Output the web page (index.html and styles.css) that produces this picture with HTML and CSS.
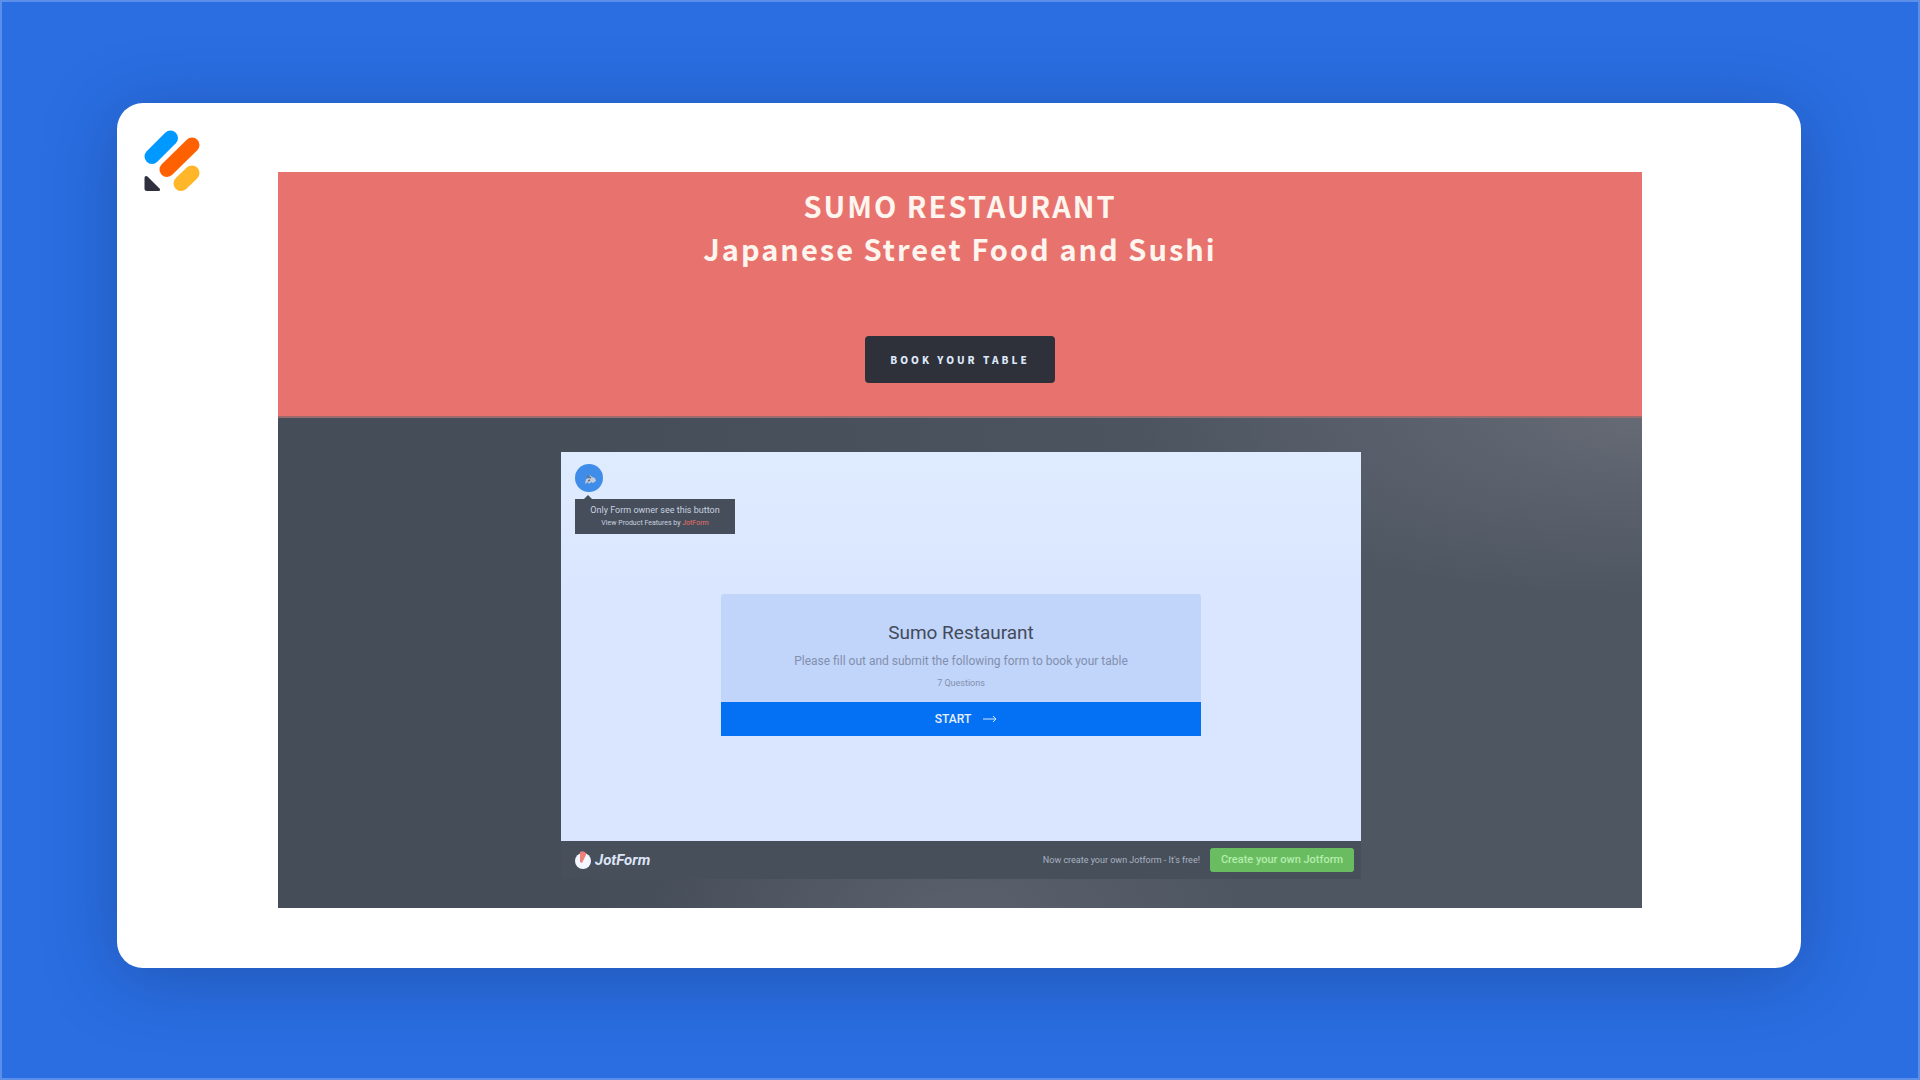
FILE: index.html
```html
<!DOCTYPE html>
<html lang="en">
<head>
  <meta charset="UTF-8" />
  <meta name="viewport" content="width=device-width, initial-scale=1.0"/>
  <title>Sumo Restaurant</title>
  <link rel="stylesheet" href="styles.css">
</head>
<body>
  <main class="card">
    <!-- Brand mark -->
    <svg class="brand" viewBox="0 0 56 62" aria-hidden="true">
      <path d="M8 26.5 L26.5 8" stroke="#0099ff" stroke-width="15" stroke-linecap="round"/>
      <path d="M23 39.5 L48 15" stroke="#ff6100" stroke-width="15" stroke-linecap="round"/>
      <path d="M37 53.5 L48 43" stroke="#ffb629" stroke-width="15" stroke-linecap="round"/>
      <path d="M0.5 48 Q0.5 46 2 46 Q3 46 4 47 L15.500 58.500 Q17 61 14.500 61 H3 Q0.500 61 0.500 58.500 Z" fill="#2e303d"/>
    </svg>

    <div class="site">
      <!-- Hero -->
      <header class="hero">
        <h1>SUMO RESTAURANT<br>Japanese Street Food and Sushi</h1>
        <a class="book" href="#form">BOOK YOUR TABLE</a>
      </header>

      <!-- Embedded form -->
      <section class="booking">
        <div class="embed" id="form">
          <div class="form-page">
            <div class="owner">
              <button class="owner-btn" type="button" aria-label="Form settings">
                <svg viewBox="0 0 14 14" aria-hidden="true">
                  <path d="M2 12 L3 7 L6 6 L7 3 L9 5 L12 6 L13 9 L10 11 L8 10 L6 12 L5 10 Z" fill="#c3cbd8"/>
                  <path d="M4 4 L8 6 M5 9 L7 8" stroke="#68727f" stroke-width="1.500"/>
                </svg>
              </button>
              <p class="tooltip">Only Form owner see this button<br><small>View Product Features by <a href="#">JotForm</a></small></p>
            </div>
            <div class="welcome">
              <div class="welcome-text">
                <h2>Sumo Restaurant</h2>
                <p>Please fill out and submit the following form to book your table</p>
                <p class="count">7 Questions</p>
              </div>
              <button class="start" type="button">START
                <svg viewBox="0 0 14 8" aria-hidden="true"><path d="M0 4 H13 M10 1 L13 4 L10 7" fill="none" stroke="#d6e8ff"/></svg>
              </button>
            </div>
          </div>
          <footer class="form-footer">
            <a class="jotform" href="#">
              <svg viewBox="0 0 18 20" aria-hidden="true">
                <circle cx="9" cy="11" r="8" fill="#f4f7ff"/>
                <path d="M6 2 Q9 0 12 3 L12 5 L8 13 L6 12 Z" fill="#ee827b"/>
              </svg>
              JotForm
            </a>
            <span class="note">Now create your own Jotform - It's free!</span>
            <a class="create" href="#">Create your own Jotform</a>
          </footer>
        </div>
      </section>
    </div>
  </main>
</body>
</html>
```
FILE: styles.css
```css
/* RESET & BASE */
* {
  margin: 0; padding: 0;
  box-sizing: border-box;
}
body {
  min-height: 100vh;
  padding: 101px 117px 110px 115px;
  border: 2px solid #5b8fe9;
  background: #2a6ee2;
  font-family: Roboto, sans-serif;
}
a { color: inherit; text-decoration: none; }
button { border: 0; font-family: inherit; cursor: pointer; }

/* CARD */
.card {
  display: grid;
  grid-template-columns: 134px 1fr;
  padding: 69px 159px 60px 27px;
  border-radius: 26px;
  background: #fff;
  box-shadow: 0 10px 70px rgba(20,50,110,0.4);
}
.brand {
  width: 56px; height: 62px;
  margin-top: -42px;
  fill: none;
}

/* HERO */
.hero {
  display: flex; flex-direction: column;
  align-items: center;
  height: 246px;
  padding-top: 12px;
  border-bottom: 2px solid #9c6b6d;
  background: #e8736e;
}
.hero h1 {
  font-family: "Noto Sans CJK JP", sans-serif;
  font-size: 29px; font-weight: 700;
  line-height: 43px; letter-spacing: 2px;
  text-align: center;
  color: #fff5ef;
}
.book {
  margin-top: 66px;
  padding: 0 25px;
  border-radius: 4px;
  background: #2e303a;
  color: #dce7f8;
  font-family: "Noto Sans CJK JP", sans-serif;
  font-size: 10px; font-weight: 900;
  line-height: 47px; letter-spacing: 3px;
}

/* BOOKING */
.booking {
  padding: 34px 0 29px 2px;
  background:
    radial-gradient(ellipse at 100% 0, rgba(104,108,119,0.9), rgba(104,108,119,0) 26%),
    radial-gradient(ellipse at 50% 106%, rgba(104,108,119,0.6), rgba(104,108,119,0) 32%),
    linear-gradient(90deg, #454d58 20%, #4d5661 75%);
}
.embed {
  width: 100%; max-width: 800px;
  margin: 0 auto;
  background: #464f5a;
}
.form-page {
  display: flex; flex-direction: column;
  height: 389px;
  padding: 12px 14px;
  background: linear-gradient(#dfecff, #dae6ff 35%);
}
.owner { display: flex; flex-direction: column; align-items: flex-start; }
.owner-btn {
  width: 28px; height: 28px;
  border-radius: 50%;
  background: #3f8de9;
}
.owner-btn svg { width: 14px; height: 14px; margin: 5px 0 0 2px; }
.tooltip {
  position: relative;
  width: 160px;
  margin-top: 7px;
  padding: 5px 0;
  background: #454e5a;
  color: #cad2e0;
  font-size: 9px; line-height: 12px;
  text-align: center;
}
.tooltip::before {
  content: "";
  position: absolute; top: -4px; left: 9px;
  border: 4px solid transparent;
  border-top: 0; border-bottom-color: #454e5a;
}
.tooltip small { font-size: 7px; }
.tooltip a { color: #e9706b; }

.welcome {
  width: 480px;
  margin: 60px auto 0;
}
.welcome-text {
  height: 108px;
  padding-top: 25px;
  border-radius: 3px 3px 0 0;
  background: #c1d4fa;
  text-align: center;
}
.welcome h2 {
  font-size: 19px; font-weight: 400;
  line-height: 28px;
  color: #434b5b;
}
.welcome p {
  font-size: 12px; line-height: 28px;
  color: #8290ad;
}
.welcome .count { font-size: 9px; line-height: 16px; }
.start {
  display: flex; align-items: center; justify-content: center;
  gap: 12px;
  width: 100%; height: 34px;
  padding-left: 10px;
  background: #0470f3;
  color: #e6f1ff;
  font-size: 12px; font-weight: 500;
}
.start svg { width: 14px; height: 8px; }

/* FORM FOOTER */
.form-footer {
  display: flex; align-items: center;
  height: 38px;
  padding: 0 7px 0 13px;
}
.jotform {
  display: flex; align-items: center;
  gap: 3px;
  margin-right: auto;
  color: #dce4f5;
  font-size: 15px; font-weight: 700; font-style: italic;
}
.jotform svg { width: 18px; height: 20px; }
.note {
  margin-right: 10px;
  color: #aab2c1;
  font-size: 9px;
}
.create {
  width: 144px;
  border-radius: 3px;
  background: #69bd60;
  color: #b3edac;
  font-size: 11px; font-weight: 500;
  line-height: 24px;
  text-align: center;
}
```
